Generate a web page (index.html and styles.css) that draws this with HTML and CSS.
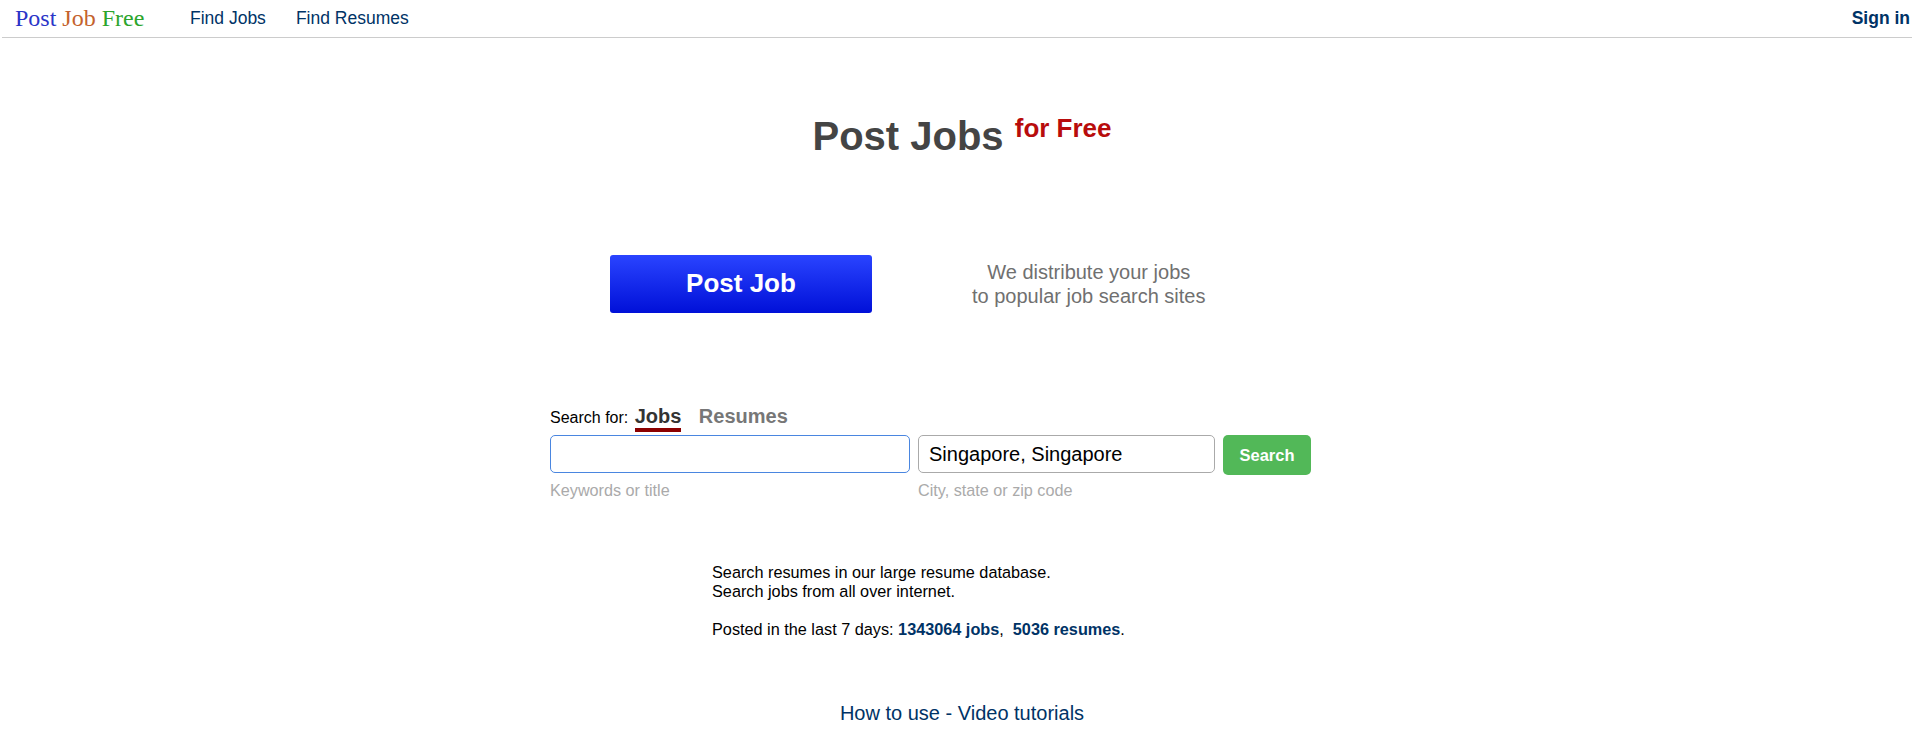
FILE: index.html
```html
<!DOCTYPE html>
<html lang="en">
<head>
    <meta charset="UTF-8">
    <title>Post Job Free</title>
    <link rel="stylesheet" href="styles.css">
</head>
<body>
    <div class="topbar">
        <a class="logo" href="#"><span class="logo-post">Post</span> <span class="logo-job">Job</span> <span class="logo-free">Free</span></a>
        <a class="nav-link" href="#">Find Jobs</a>
        <a class="nav-link" href="#">Find Resumes</a>
        <a class="sign-in" href="#">Sign in</a>
    </div>

    <h1 class="title">Post Jobs <span class="title-free">for Free</span></h1>

    <div class="post-row">
        <a class="post-button" href="#">Post Job</a>
        <p class="post-note">We distribute your jobs<br>to popular job search sites</p>
    </div>

    <div class="search">
        <div class="search-tabs">
            <span class="search-label">Search for:</span>
            <a class="tab tab-active" href="#">Jobs</a>
            <a class="tab" href="#">Resumes</a>
        </div>
        <div class="search-row">
            <div class="field field-keywords">
                <input class="search-input input-focus" type="text">
                <div class="hint">Keywords or title</div>
            </div>
            <div class="field field-location">
                <input class="search-input" type="text" value="Singapore, Singapore">
                <div class="hint">City, state or zip code</div>
            </div>
            <button class="search-button">Search</button>
        </div>
    </div>

    <div class="info">
        Search resumes in our large resume database.<br>
        Search jobs from all over internet.<br>
        <br>
        Posted in the last 7 days: <a class="count" href="#">1343064 jobs</a>,&nbsp; <a class="count" href="#">5036 resumes</a>.
    </div>

    <div class="tutorials"><a href="#">How to use - Video tutorials</a></div>
</body>
</html>
```

FILE: styles.css
```css
body {
    margin: 0;
    background-color: white;
    color: black;
    font-family: "Liberation Sans", Arial, sans-serif;
    overflow: hidden;
}
a {
    text-decoration: none;
    color: #003366;
}
.topbar {
    display: flex;
    align-items: center;
    height: 37px;
    margin-left: 2px;
    border-bottom: 1px solid #cccccc;
}
.logo {
    width: 175px;
    padding-left: 13px;
    font-family: "Liberation Serif", serif;
    font-size: 24px;
    white-space: nowrap;
}
.logo-post {
    color: #2a35c8;
}
.logo-job {
    color: #c4622d;
}
.logo-free {
    color: #2ca52c;
}
.nav-link {
    font-size: 17.5px;
    margin-right: 30px;
}
.sign-in {
    margin-left: auto;
    margin-right: 2px;
    font-size: 17.5px;
    font-weight: bold;
}
.title {
    margin: 75px 0 0 0;
    padding-left: 12px;
    text-align: center;
    color: #444444;
    font-size: 40px;
    line-height: 46px;
}
.title-free {
    position: relative;
    top: -13px;
    color: #b80c0c;
    font-size: 26px;
}
.post-row {
    display: flex;
    align-items: center;
    margin: 91px 0 0 610px;
}
.post-button {
    width: 262px;
    height: 58px;
    line-height: 56px;
    text-align: center;
    color: white;
    font-size: 26px;
    font-weight: bold;
    border-radius: 3px;
    background: linear-gradient(#2a44ff, #0010d8);
}
.post-note {
    margin: 0 0 0 100px;
    text-align: center;
    color: #707070;
    font-size: 20px;
    line-height: 24px;
}
.search {
    margin: 92px 0 0 550px;
}
.search-tabs {
    height: 30px;
    font-size: 16px;
}
.search-label {
    margin-right: 2px;
}
.tab {
    display: inline-block;
    height: 23px;
    font-size: 20px;
    font-weight: bold;
    color: #777777;
    margin-right: 13px;
}
.tab-active {
    color: #333333;
    border-bottom: 4px solid #8b0000;
}
.search-row {
    display: flex;
    align-items: flex-start;
    height: 63px;
}
.field-keywords {
    width: 360px;
    margin-right: 8px;
}
.field-location {
    width: 297px;
    margin-right: 8px;
}
.search-input {
    display: block;
    box-sizing: border-box;
    width: 100%;
    height: 38px;
    padding: 0 10px;
    border: 1px solid #aaaaaa;
    border-radius: 5px;
    font-family: "Liberation Sans", Arial, sans-serif;
    font-size: 20px;
    color: black;
}
.input-focus {
    border-color: #4a86e0;
}
.hint {
    margin-top: 8px;
    color: #aaaaaa;
    font-size: 16.2px;
}
.search-button {
    width: 88px;
    height: 40px;
    padding: 0;
    border: 0;
    border-radius: 5px;
    background-color: #52b858;
    color: white;
    font-family: "Liberation Sans", Arial, sans-serif;
    font-size: 16.5px;
    font-weight: bold;
}
.info {
    margin: 65px 0 0 712px;
    font-size: 16.25px;
    line-height: 19px;
}
.count {
    font-weight: bold;
}
.tutorials {
    margin-top: 63px;
    padding-left: 12px;
    text-align: center;
    font-size: 20px;
}
```
